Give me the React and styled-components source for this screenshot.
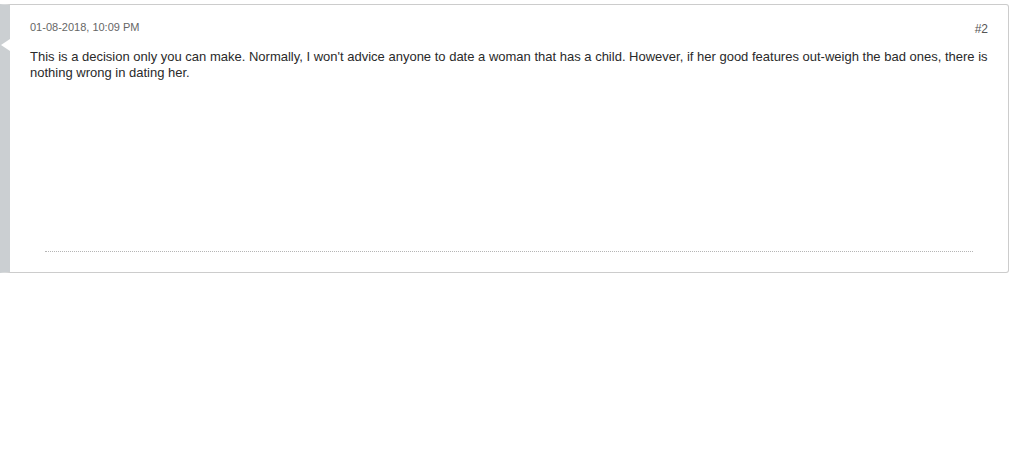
import React from "react";
import styled, { createGlobalStyle } from "styled-components";

const GlobalStyle = createGlobalStyle`
  html, body {
    margin: 0;
    padding: 0;
    background: #ffffff;
    font-family: "Liberation Sans", Arial, sans-serif;
  }
`;

const Page = styled.div`
  padding: 4px 4px 0 0;
`;

const PostCard = styled.article`
  position: relative;
  box-sizing: border-box;
  height: 269px;
  display: flex;
  flex-direction: column;
  padding: 14px 20px 20px 20px;
  background: #ffffff;
  border: 1px solid #cccccc;
  border-left: 10px solid #cbcfd2;
  border-radius: 0 3px 3px 0;

  &::before {
    content: "";
    position: absolute;
    left: -9px;
    top: 34px;
    width: 0;
    height: 0;
    border-top: 6px solid transparent;
    border-bottom: 6px solid transparent;
    border-right: 9px solid #ffffff;
  }
`;

const PostHeader = styled.header`
  display: flex;
  justify-content: space-between;
  align-items: center;
  height: 16px;
`;

const PostDate = styled.span`
  font-size: 11px;
  line-height: 16px;
  color: #666666;
`;

const PostNumber = styled.a`
  font-size: 12px;
  line-height: 16px;
  color: #555555;
  text-decoration: none;
  margin-top: 4px;
`;

const PostBody = styled.div`
  margin-top: 14px;
  font-size: 13px;
  line-height: 16px;
  color: #2a2a2a;
`;

const Signature = styled.hr`
  margin: auto 15px 0 15px;
  border: 0;
  border-top: 1px dotted #b5b5b5;
  height: 0;
`;

export default function App() {
  return (
    <>
      <GlobalStyle />
      <Page>
        <PostCard>
          <PostHeader>
            <PostDate>01-08-2018, 10:09 PM</PostDate>
            <PostNumber href="#">#2</PostNumber>
          </PostHeader>
          <PostBody>
            This is a decision only you can make. Normally, I won't advice anyone to date a woman that has a child. However, if her good features out-weigh the bad ones, there is nothing wrong in dating her.
          </PostBody>
          <Signature />
        </PostCard>
      </Page>
    </>
  );
}
